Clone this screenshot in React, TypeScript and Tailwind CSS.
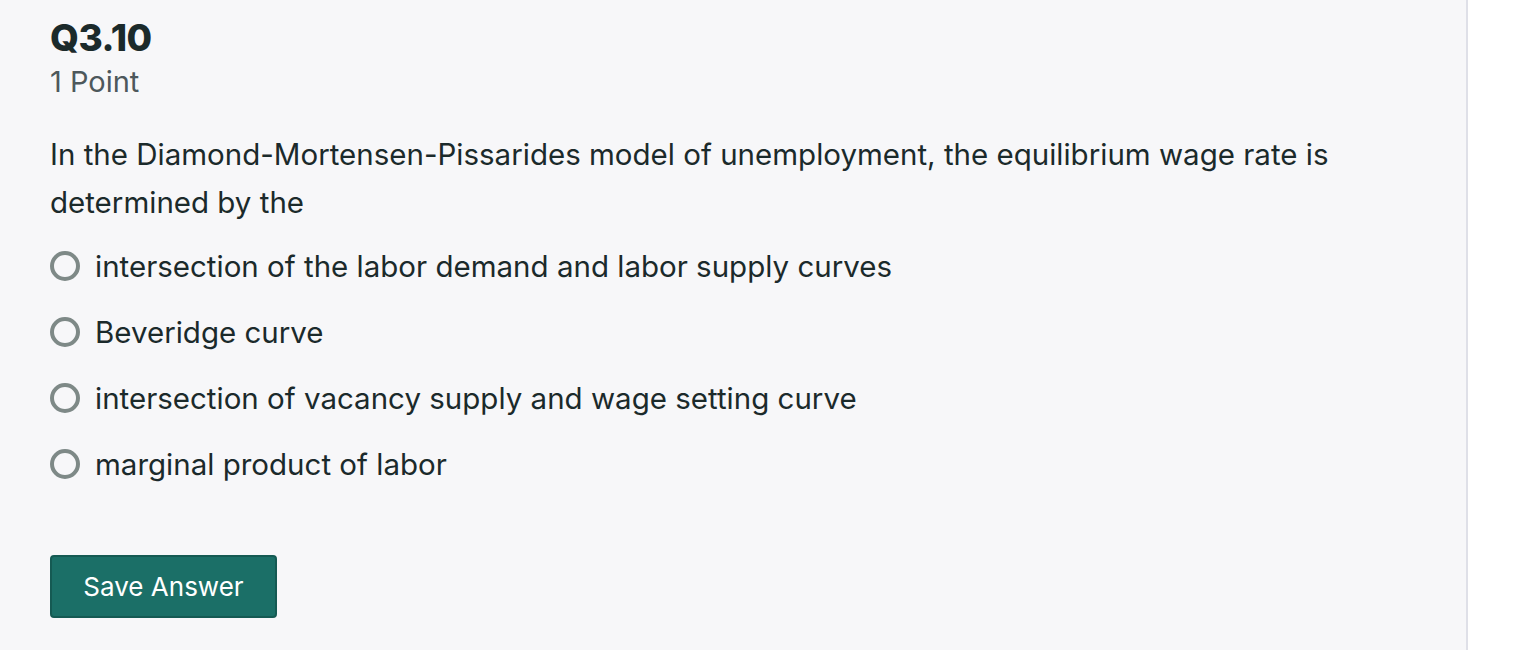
import { useState } from 'react';

const options = [
  'intersection of the labor demand and labor supply curves',
  'Beveridge curve',
  'intersection of vacancy supply and wage setting curve',
  'marginal product of labor',
];

export default function App() {
  const [selected, setSelected] = useState<number | null>(null);

  return (
    <div className="flex h-[650px] w-[1514px] bg-white font-['Inter',sans-serif] text-[#1b2a2b]">
      <div className="w-[1468px] border-r-2 border-[#dfe0e8] bg-[#f7f7f9] pl-[50px] pt-[18px]">
        <h2 className="text-[37px] font-extrabold leading-[40px] tracking-[-0.5px]">Q3.10</h2>
        <div className="mt-[6px] text-[29px] leading-[36px] text-[#4d585c]">1 Point</div>

        <p className="mt-[30px] w-[1340px] text-[29.5px] leading-[48px]">
          In the Diamond-Mortensen-Pissarides model of unemployment, the equilibrium wage rate is determined by the
        </p>

        <div className="mt-[7px] flex flex-col">
          {options.map((opt, i) => (
            <label
              key={i}
              className="flex h-[66px] cursor-pointer items-center gap-[15px]"
              onClick={() => setSelected(i)}
            >
              <span className="flex h-[30px] w-[30px] items-center justify-center rounded-full border-4 border-[#7e8987]">
                {selected === i && <span className="h-[12px] w-[12px] rounded-full bg-[#1b6f67]" />}
              </span>
              <span className="text-[29.5px] leading-[36px]">{opt}</span>
            </label>
          ))}
        </div>

        <button className="mt-[58px] h-[63px] w-[227px] rounded-[4px] border-2 border-[#155a53] bg-[#1b6f67] text-[26px] text-white">
          Save Answer
        </button>
      </div>
    </div>
  );
}
